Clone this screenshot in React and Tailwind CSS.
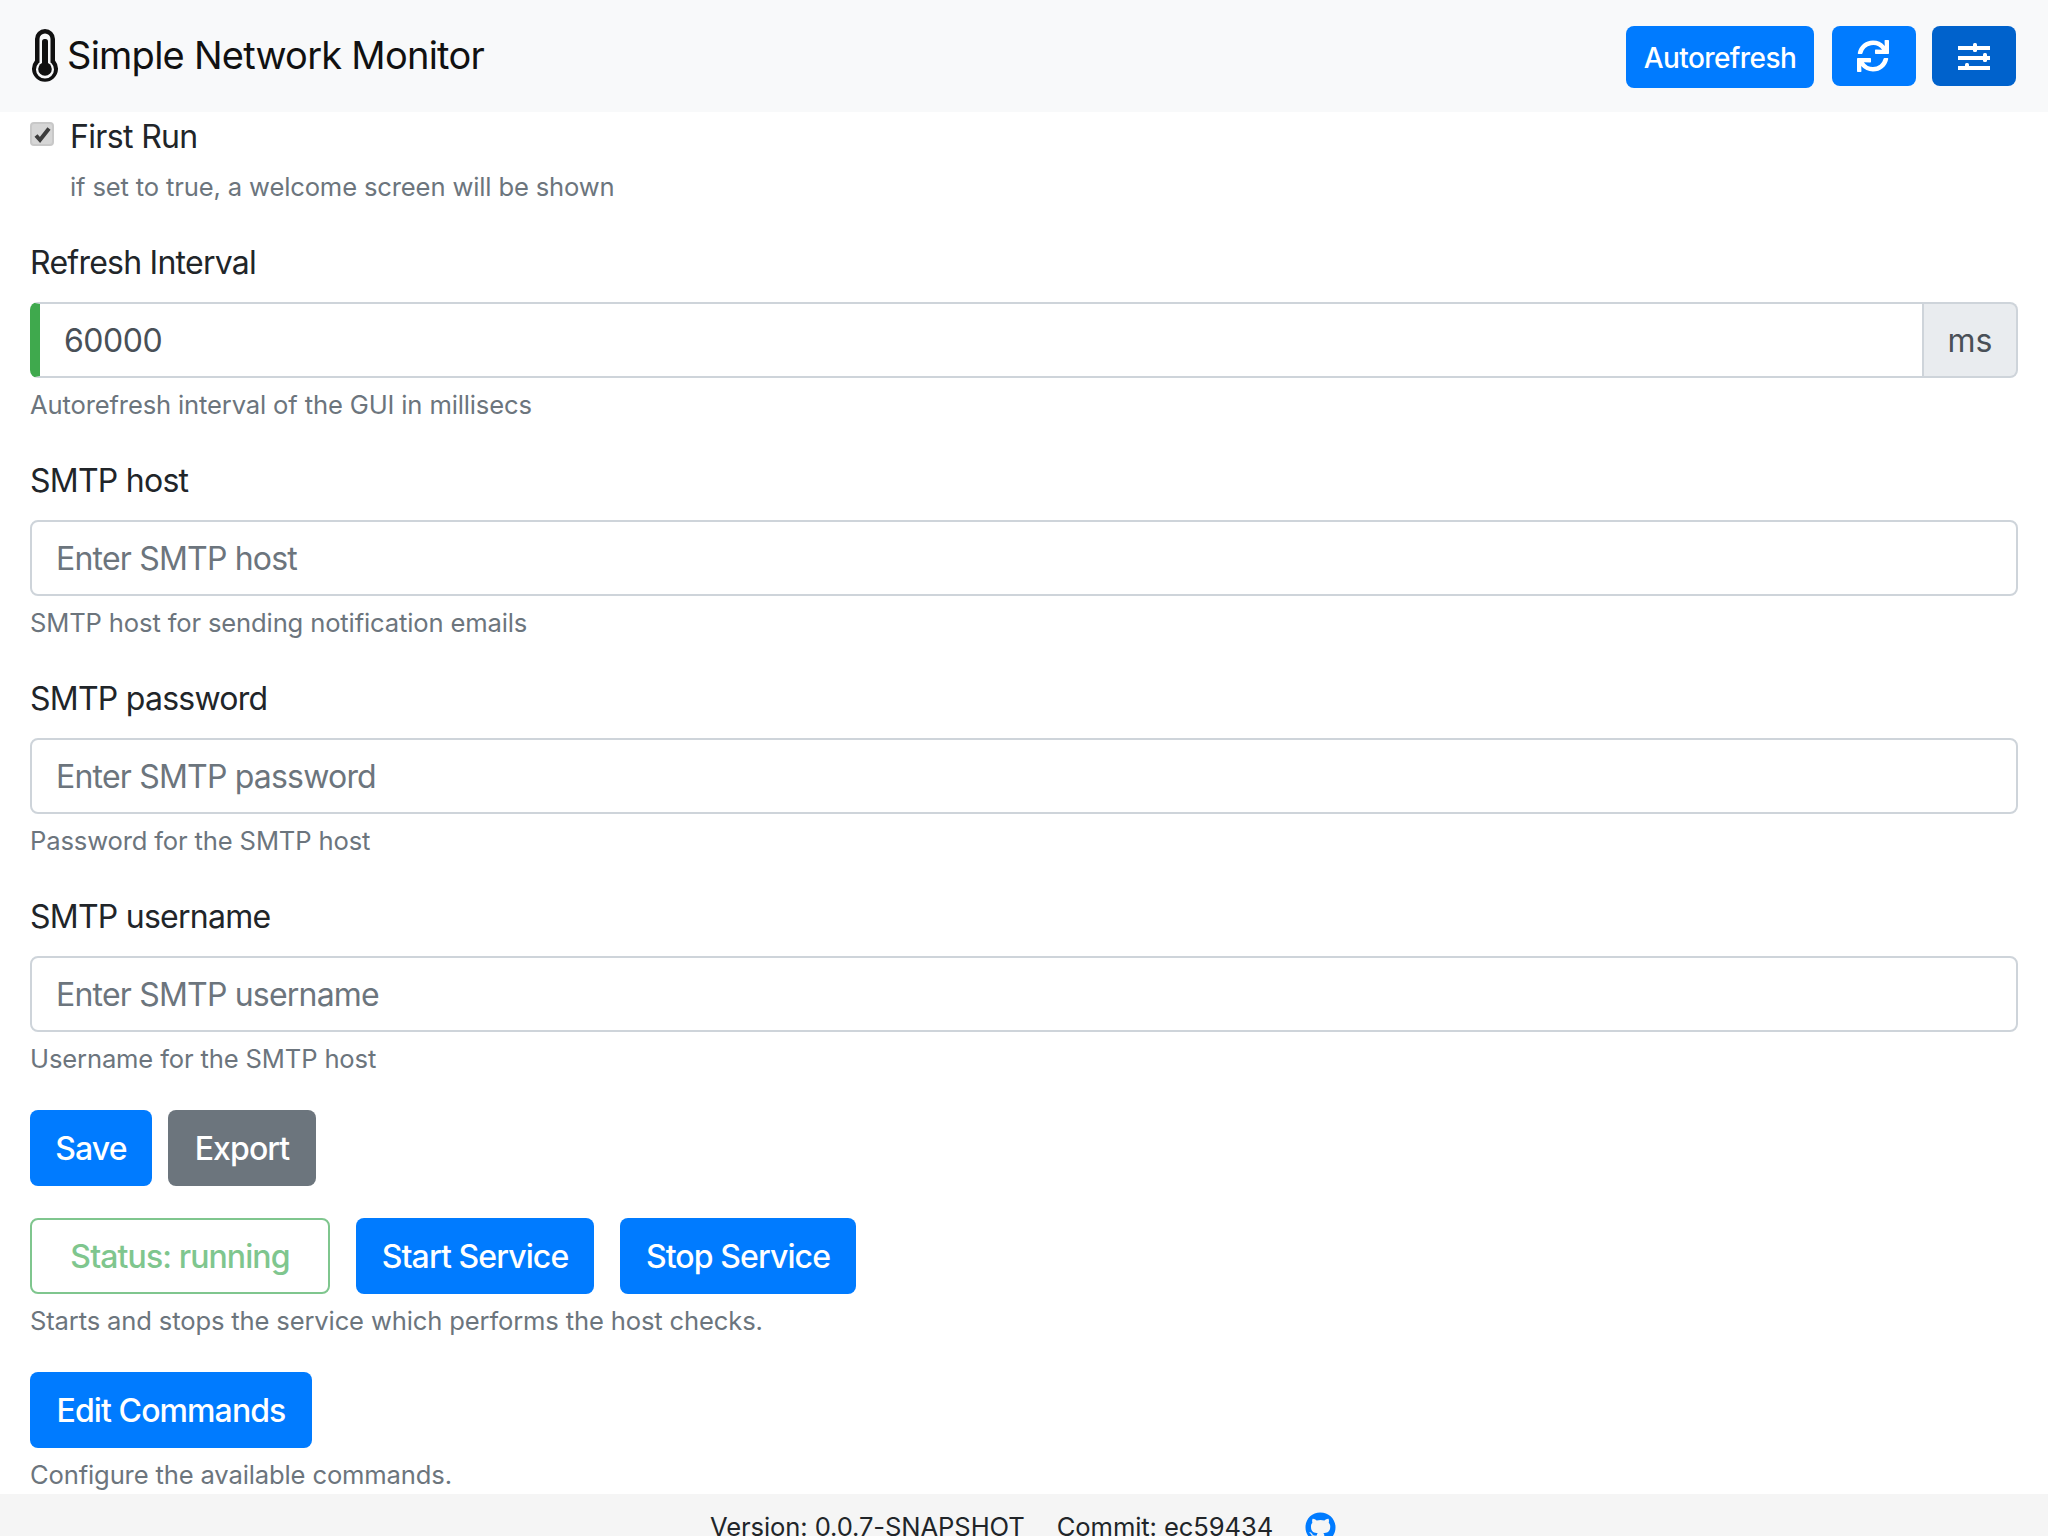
import React from "react";
import { FaSync, FaGithub } from "react-icons/fa";

const font = "font-['Inter','Noto_Sans',sans-serif]";
const help = "h-[38px] mt-2 text-[25.6px] leading-[38px] tracking-[-0.15px] text-[#6c757d]";
const labelCls = "block h-12 mb-4 text-[32px] leading-[50px] tracking-[-0.75px] text-[#212529]";

function Thermometer() {
  return (
    <svg width="26" height="53" viewBox="0 0 26 53" className="shrink-0">
      <path
        fillRule="evenodd"
        d="M13 0a10 10 0 0 1 10 10v21.500a13 13 0 1 1-20 0V10a10 10 0 0 1 10-10zm0 4.500a5.500 5.500 0 0 0-5.500 5.500v23.500a8.800 8.800 0 0 0-1 .8a9 9 0 1 0 13 0a8.800 8.800 0 0 0-1-.8V10a5.500 5.500 0 0 0-5.500-5.500z"
        fill="#111"
      />
      <rect x="10" y="10" width="6" height="28" rx="2.500" fill="#111" />
      <circle cx="13" cy="40" r="6.800" fill="#111" />
    </svg>
  );
}

function Sliders() {
  return (
    <svg width="32" height="28" viewBox="0 0 32 28" fill="#fff">
      <rect x="0" y="4" width="32" height="4" />
      <rect x="15" y="1" width="4" height="9" rx="1.500" />
      <rect x="0" y="14" width="32" height="4" />
      <rect x="25" y="11" width="4" height="9" rx="1.500" />
      <rect x="0" y="24" width="32" height="4" />
      <rect x="7" y="21" width="4" height="7" rx="1.500" />
    </svg>
  );
}

function Field({ label, placeholder, helpText }) {
  return (
    <div className="mb-8">
      <label className={labelCls}>{label}</label>
      <input
        placeholder={placeholder}
        className="block w-full h-[76px] px-6 text-[32px] tracking-[-0.8px] text-[#495057] placeholder:text-[#6c757d] bg-white border-2 border-[#ced4da] rounded-lg outline-none"
      />
      <p className={help}>{helpText}</p>
    </div>
  );
}

function Btn({ children, className }) {
  return (
    <button className={"h-[76px] pt-[2px] rounded-lg text-[32px] font-medium tracking-[-0.9px] text-white " + className}>{children}</button>
  );
}

export default function App() {
  return (
    <div className={"h-[1536px] overflow-hidden flex flex-col bg-white " + font}>
      <nav className="h-[112px] shrink-0 flex items-start justify-between pt-[26px] px-8 bg-[#f8f9fa]">
        <div className="flex items-center gap-[9px] mt-[1px] text-[38px] tracking-[-0.75px] text-[#111]">
          <Thermometer />
          <span>Simple Network Monitor</span>
        </div>
        <div className="flex items-start">
          <button className="h-[62px] w-[188px] pt-[2px] rounded-lg bg-[#007bff] text-[28px] font-medium tracking-[-0.6px] text-white">Autorefresh</button>
          <button className="h-[60px] w-[84px] ml-[18px] pr-[2px] rounded-lg bg-[#007bff] text-white flex items-center justify-center">
            <FaSync size={32} />
          </button>
          <button className="h-[60px] w-[84px] ml-4 rounded-lg bg-[#0062cc] flex items-center justify-center">
            <Sliders />
          </button>
        </div>
      </nav>

      <main className="flex-1 px-[30px]">
        <div className="mb-8">
          <div className="flex items-start h-12">
            <span className="w-[24px] h-[24px] mt-[10px] mr-[16px] rounded-[4px] border-2 border-[#c8c8c8] bg-[#d6d6d6] flex items-center justify-center">
              <svg width="19" height="19" viewBox="0 0 19 19">
                <path d="M3 10.500l4 4.500L16 3.500" fill="none" stroke="#3c3c3c" strokeWidth="4" />
              </svg>
            </span>
            <label className="text-[32px] leading-[50px] tracking-[-0.65px] text-[#212529]">First Run</label>
          </div>
          <p className={"pl-10 " + help}>if set to true, a welcome screen will be shown</p>
        </div>

        <div className="mb-8">
          <label className={labelCls}>Refresh Interval</label>
          <div className="flex h-[76px]">
            <input
              defaultValue="60000"
              className="flex-1 min-w-0 pl-6 pt-[2px] text-[32px] tracking-[-0.5px] text-[#495057] border-2 border-l-[10px] border-[#ced4da] border-l-[#3fa94d] rounded-l-lg outline-none"
            />
            <span className="w-[94px] pt-[2px] flex items-center justify-center text-[32px] text-[#495057] bg-[#e9ecef] border-2 border-l-0 border-[#ced4da] rounded-r-lg">ms</span>
          </div>
          <p className={help}>Autorefresh interval of the GUI in millisecs</p>
        </div>

        <Field label="SMTP host" placeholder="Enter SMTP host" helpText="SMTP host for sending notification emails" />
        <Field label="SMTP password" placeholder="Enter SMTP password" helpText="Password for the SMTP host" />
        <Field label="SMTP username" placeholder="Enter SMTP username" helpText="Username for the SMTP host" />

        <div className="flex gap-4 mb-8">
          <Btn className="w-[122px] bg-[#007bff]">Save</Btn>
          <Btn className="w-[148px] bg-[#6c757d]">Export</Btn>
        </div>

        <div className="flex gap-[26px]">
          <button className="h-[76px] w-[300px] pt-[2px] rounded-lg border-2 border-[#7fc68e] text-[32px] font-medium tracking-[-0.9px] text-[#7fc68e]">Status: running</button>
          <Btn className="w-[238px] bg-[#007bff]">Start Service</Btn>
          <Btn className="w-[236px] bg-[#007bff]">Stop Service</Btn>
        </div>
        <p className={"mb-8 " + help}>Starts and stops the service which performs the host checks.</p>

        <Btn className="block w-[282px] bg-[#007bff]">Edit Commands</Btn>
        <p className={help}>Configure the available commands.</p>
      </main>

      <footer className="h-[42px] shrink-0 bg-[#f5f5f5] flex justify-center items-start pt-[18px] pr-[2px] text-[25.6px] leading-[30px] tracking-[-0.1px] text-[#212529]">
        <span>Version: 0.0.7-SNAPSHOT</span>
        <span className="ml-8">Commit: ec59434</span>
        <FaGithub size={31} className="ml-8 text-[#007bff]" />
      </footer>
    </div>
  );
}
